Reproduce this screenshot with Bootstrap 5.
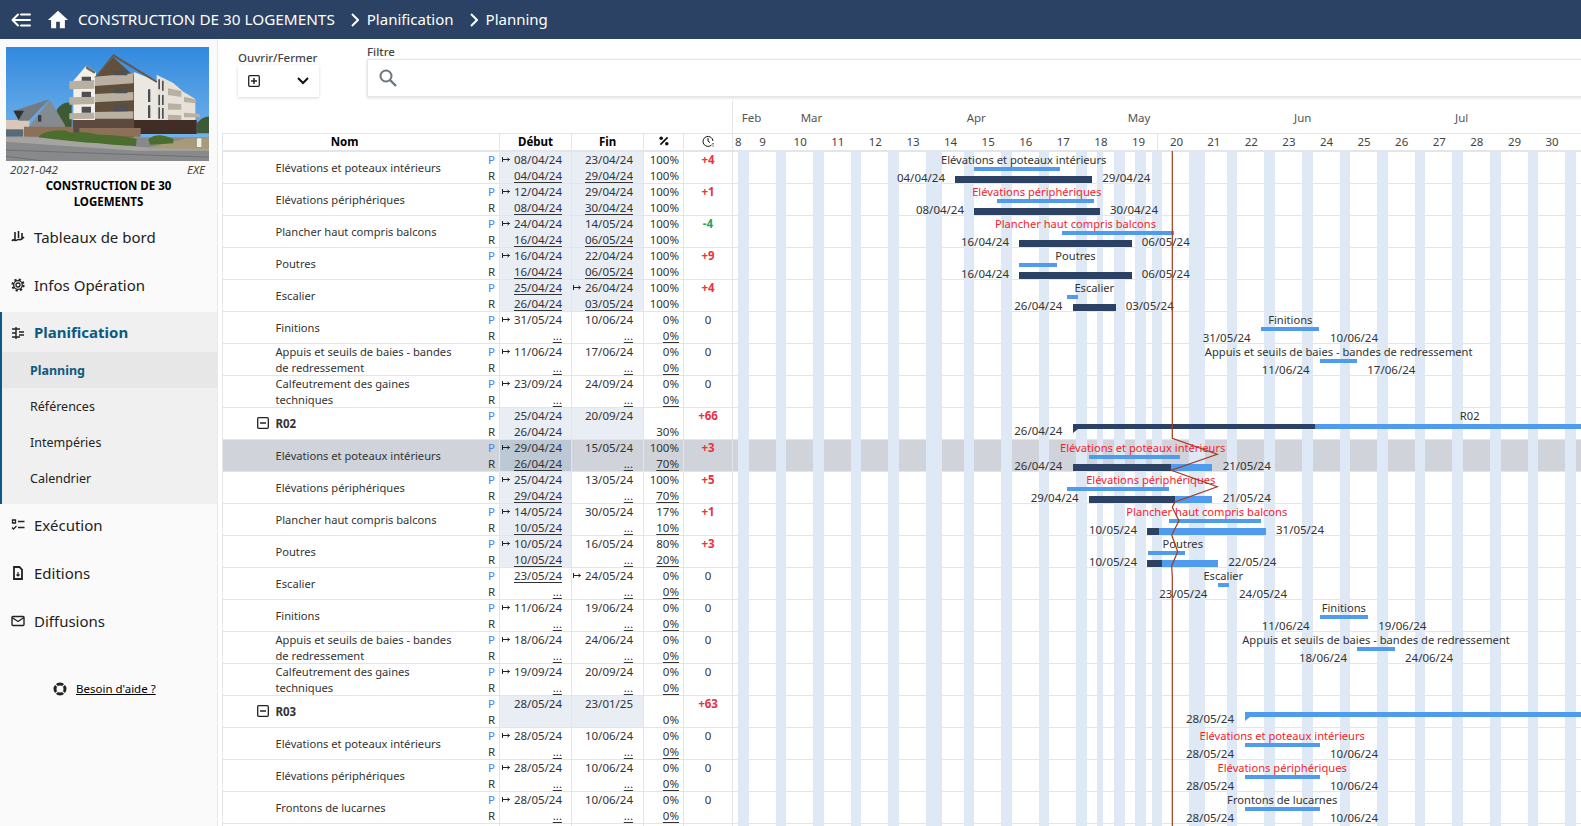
<!DOCTYPE html>
<html lang="fr">
<head>
  <meta charset="UTF-8">
  <title>Planning</title>
  <link href="https://cdn.jsdelivr.net/npm/bootstrap@5.3.2/dist/css/bootstrap.min.css" rel="stylesheet">
  <style>
    html, body { height: 100%; overflow: hidden; }
    body { font-family: "Noto Sans", "Open Sans", sans-serif; font-size: 11.5px; color: #333; background: #fff; }
    .topbar { height: 39px; flex: none; background: #2b4264; color: #fff; font-size: 15px; padding-left: 11px; }
    .topbar svg { flex: none; }
    .top-title { font-size: 15.3px; margin-left: 9px; }
    .sidebar { width: 218px; flex: none; background: #fafafa; border-right: 1px solid #e9e9e9; padding-top: 8px; }
    .photo { display: block; width: 203px; height: 114px; margin-left: 6px; }
    .code-line { padding: 1px 12px 0 10px; font-style: italic; font-size: 11.5px; line-height: 16px; color: #444; }
    .op-title { font-weight: 700; font-size: 11.5px; line-height: 16px; color: #000; text-align: center; padding: 0 30px; margin-bottom: 3px; }
    .nav-main { height: 48px; font-size: 15px; color: #222; padding-left: 11px; gap: 9px; }
    .nav-main svg { flex: none; width: 14px; height: 14px; }
    .plan-section { background: #f0f0f0; border-left: 2px solid #0c5a82; margin: 3px 0 -3px; padding-bottom: 8px; }
    .plan-head { height: 40px; padding-top: 1px; font-size: 15px; font-weight: 700; color: #0c5a82; padding-left: 9px; gap: 9px; }
    .plan-head svg { flex: none; width: 14px; height: 14px; }
    .sub-item { height: 36px; padding: 2px 0 0 28px; font-size: 12.5px; color: #222; }
    .sub-item.active { background: #e7e7e7; font-weight: 700; color: #0c5a82; }
    .help { margin-top: 35px; font-size: 11.5px; padding-left: 53px; gap: 9px; color: #000; }
    .main-area { min-width: 0; overflow: hidden; padding-left: 4px; }
    .toolbar { height: 62px; }
    .tool-open { width: 81px; margin: 11px 48px 0 16px; flex: none; }
    .tool-label { font-size: 11.5px; font-weight: 500; color: #444; line-height: 15px; white-space: nowrap; }
    .open-box { height: 32px; background: #fff; box-shadow: 0 1px 3px rgba(0,0,0,.16); padding: 0 10px; }
    .tool-filter { margin-top: 5px; width: 1300px; flex: none; }
    .filter-box { height: 38px; background: #fff; border: 1px solid #e6e6e6; box-shadow: 0 1px 3px rgba(0,0,0,.14); padding-left: 11px; }
    .months { height: 32px; margin-left: 510px; border-left: 1px solid #e3e5ea; color: #555; }
    .month { top: 8px; }
    .plan-wrap { width: 1360px; }
    .plan-table { table-layout: fixed; width: 1360px; margin: 0; border-color: #e3e5ea; font-size: 11.5px; color: #333; }
    .plan-table th, .plan-table td { padding: 0; border-color: #e3e5ea; line-height: 15.5px; vertical-align: middle; background: transparent; color: inherit; box-shadow: none; }
    .plan-table thead th { height: 17px; font-weight: 700; color: #000; text-align: center; font-size: 11.5px; border-bottom-width: 2px; }
    .plan-table thead th.nom { padding-right: 33px; }
    .plan-table tbody td { height: 31px; }
    .hd-icon { display: block; margin: -3px auto 0; }
    .week-row { height: 16px; overflow: hidden; font-weight: 400; color: #444; }
    .week { width: 37.6px; flex: none; text-align: center; }
    .week.first { width: 10.8px; }
    .week.now { border-left: 1px solid #e3e5ea; }
    .name-cell { height: 31px; padding-left: 52.5px; }
    .name-text { flex: 1; max-width: 186px; margin-right: auto; line-height: 16px; font-size: 11.15px; }
    .group-name { font-weight: 700; font-size: 11.5px; }
    .minus { position: absolute; left: 34px; top: 9px; }
    .pr { width: 15px; flex: none; text-align: center; margin-left: auto; }
    .p-letter { color: #4a80e6; }
    .date-line { height: 15.5px; padding-right: 10px; white-space: nowrap; }
    .deb .date-line { padding-right: 9px; }
    .date-line u { text-underline-offset: 2px; }
    .arrow { margin-right: 4px; }
    .pct { text-align: right; padding-right: 4px !important; }
    .pct u { text-underline-offset: 2px; }
    .delay { text-align: center; }
    .delay b { font-weight: 700; }
    .late { color: #e8323f; }
    .early { color: #2aa35a; }
    .shade { background: #e9edf4 !important; }
    tr.selected td { background: #d0d3da !important; }
    tr.selected td.shade { background: #bcc8d3 !important; }
    .stripes { top: 18px; bottom: 0; left: 511px; right: 0; z-index: 1; }
    .stripe { top: 0; bottom: 0; background: #dee9f5; }
    .gantt-cell { position: relative; }
    .g { position: absolute; z-index: 2; white-space: nowrap; line-height: 16px; }
    .g-label { top: 0; transform: translateX(-50%); font-size: 11.15px; }
    .g-red { color: #f5222d; }
    .g-date { top: 18px; }
    .g-plan { top: 15px; height: 4px; background: #4f9bee; }
    .g-dark { top: 24px; height: 7px; background: #2b4264; }
    .g-light { top: 24px; height: 7px; background: #4f9bee; }
    .g-sum { top: 16px; height: 5px; }
    .today { left: 0; top: 0; z-index: 3; pointer-events: none; }
  </style>
</head>
<body class="d-flex flex-column">

  <header class="topbar d-flex align-items-center">
    <svg width="20" height="14" viewBox="0 0 20 14" fill="none" stroke="#fff" stroke-width="2" stroke-linecap="round" stroke-linejoin="round"><path d="M7 1.500 1.500 7 7 12.500M1.500 7H19M10 1.500h9M10 12.500h9"/></svg>
    <svg class="ms-3" width="22" height="22" viewBox="0 0 24 24" fill="#fff"><path d="M10 21v-7h4v7h5.500v-9H23L12 2 1 12h3.500v9z"/></svg>
    <span class="top-title">CONSTRUCTION DE 30 LOGEMENTS</span>
    <svg class="ms-3" width="8" height="14" viewBox="0 0 8 14" fill="none" stroke="#fff" stroke-width="2"><path d="m1 1 6 6-6 6"/></svg>
    <span class="ms-2">Planification</span>
    <svg class="ms-3" width="8" height="14" viewBox="0 0 8 14" fill="none" stroke="#fff" stroke-width="2"><path d="m1 1 6 6-6 6"/></svg>
    <span class="ms-2">Planning</span>
  </header>

  <div class="d-flex flex-grow-1 overflow-hidden">
    <aside class="sidebar">
      <svg class="photo" viewBox="18 21 609 342" preserveAspectRatio="none">
        <defs>
          <linearGradient id="sky" x1="0" y1="0" x2="0" y2="1"><stop offset="0" stop-color="#2f88de"/><stop offset="1" stop-color="#74b3ea"/></linearGradient>
          <filter id="soft" x="0" y="0" width="100%" height="100%"><feGaussianBlur stdDeviation="1.500"/></filter>
          <clipPath id="frame"><rect x="18" y="21" width="609" height="342"/></clipPath>
        </defs>
        <g clip-path="url(#frame)"><g filter="url(#soft)">
        <rect x="10" y="10" width="630" height="290" fill="url(#sky)"/>
        <path d="M170 210q20-30 45-20v75h-45zM590 250q20-25 45-20v50h-45z" fill="#3d5a34"/>
        <!-- ground -->
        <rect x="10" y="292" width="630" height="80" fill="#88898b"/>
        <path d="M10 292h108l310 30h210v10H410L10 305z" fill="#a5a4a1"/>
        <path d="M10 330 640 352M10 348l128 16" stroke="#626366" stroke-width="2" fill="none"/>
        <path d="M440 325l120-30h80v32z" fill="#a79a76"/>
        <!-- neighbour house -->
        <path d="M10 240h78v50H10z" fill="#d8c8ba"/>
        <path d="M88 258 150 180l45 76v14H88z" fill="#858a8f"/>
        <path d="M42 212 148 178 86 242H56z" fill="#757a80"/>
        <path d="M40 212h32L56 240z" fill="#2f3135"/>
        <rect x="114" y="225" width="10" height="20" fill="#3a3d40"/>
        <path d="M10 268h60v22H10z" fill="#566a78"/>
        <!-- far wing -->
        <path d="M470 104l50 25 30 26 36 22v88H470z" fill="#e6e1d9"/>
        <!-- main block -->
        <path d="M402 96 472 124v136h-70z" fill="#ebe8e2"/>
        <path d="M220 122 258 78l30 17v150h-68z" fill="#f3f0ea"/>
        <path d="M285 112 340 52l62 56v132H285z" fill="#5f4f3b"/>
        <path d="M284 112 340 42l132 82-3 4-129-78-51 66z" fill="#66584a"/>
        <path d="M258 78l30 17-5 6-25-15z" fill="#77695a"/>
        <path d="M208 124l75-4v26l-75 2zM208 172l75-2v22l-75 2zM208 220l75-2v18l-75 2zM285 110l115-10v30l-115 8zM285 162l115-6v25l-115 6zM285 216l115-2v22H285zM504 145l40 8v18l-40-6zM504 190l40 3v16h-40zM504 224l40 2v14h-40zM552 170l34 8v12l-34-4zM552 218l48 4v10h-48z" fill="#b9b0a1"/>
        <path d="M245 110h28v12h-28zM245 155h28v16h-28zM245 200h28v18h-28zM342 94h40v12h-40zM342 146h40v14h-40zM342 194h40v20h-40zM444 148h7v38h-7zM444 196h7v38h-7zM475 118h5v30h-5zM475 164h5v32h-5zM475 202h5v34h-5zM486 122h5v30h-5zM486 165h5v30h-5zM486 204h5v32h-5z" fill="#4e4f52"/>
        <!-- brick base and fence -->
        <path d="M218 240h184v52H218z" fill="#5c4a40"/>
        <path d="M402 240h188v42H402z" fill="#3f2d28"/>
        <path d="M72 260h148v30H72zM238 264h184v26H238z" fill="#8c6f58"/>
        <!-- hedges -->
        <path d="M115 292q8-14 40-18 30-8 60 4 40-6 80 6 60 0 115 12l-2 22q-60-2-110-8-80-4-183-18zM445 298q25-24 75-2v14l-70 4z" fill="#4b6e2d"/>
        <rect x="591" y="295" width="13" height="26" fill="#eee"/>
        </g></g>
      </svg>
      <div class="code-line d-flex justify-content-between"><span>2021-042</span><span>EXE</span></div>
      <div class="op-title">CONSTRUCTION DE 30 LOGEMENTS</div>
      <div class="nav-main d-flex align-items-center">
        <svg viewBox="0 0 14 14" fill="none" stroke="#222" stroke-width="1.600"><path d="M4 2v8M7.500 1v7M11 3v6M1 11c2-3 3 1 5-1s3 2 7-3"/></svg>Tableaux de bord
      </div>
      <div class="nav-main d-flex align-items-center">
        <svg viewBox="0 0 14 14" fill="none" stroke="#222"><circle cx="7" cy="7" r="2" stroke-width="1.300"/><circle cx="7" cy="7" r="4.300" stroke-width="1.300"/><circle cx="7" cy="7" r="5.600" stroke-width="2" stroke-dasharray="2.200 2.200"/></svg>Infos Opération
      </div>
      <div class="plan-section">
        <div class="plan-head d-flex align-items-center">
          <svg viewBox="0 0 14 14" fill="none" stroke="#222" stroke-width="1.400"><path d="M5 1v12M1 3h8M1 7h4M1 11h8M8 6h5M8 9h5"/></svg>Planification
        </div>
        <div class="sub-item active d-flex align-items-center">Planning</div>
        <div class="sub-item d-flex align-items-center">Références</div>
        <div class="sub-item d-flex align-items-center">Intempéries</div>
        <div class="sub-item d-flex align-items-center">Calendrier</div>
      </div>
      <div class="nav-main d-flex align-items-center">
        <svg viewBox="0 0 14 14" fill="none" stroke="#222" stroke-width="1.300"><path d="M1.500 2h3v3h-3zM7 3.500h6.500M1 9.500l1.500 1.500 3-3M7 9.500h6.500"/></svg>Exécution
      </div>
      <div class="nav-main d-flex align-items-center">
        <svg viewBox="0 0 14 14" fill="none" stroke="#222" stroke-width="1.800"><path d="M3 1h5.500L11 3.500V13H3z"/><path d="M7 6v4M5.500 8.500 7 10l1.500-1.500" stroke-width="1.200"/></svg>Editions
      </div>
      <div class="nav-main d-flex align-items-center">
        <svg viewBox="0 0 14 14" fill="none" stroke="#222" stroke-width="1.400"><rect x="1" y="2.500" width="12" height="9" rx="1"/><path d="m1 3.500 6 4 6-4"/></svg>Diffusions
      </div>
      <div class="help d-flex align-items-center">
        <svg width="14" height="14" viewBox="0 0 14 14" fill="none" stroke="#222"><circle cx="7" cy="7" r="5" stroke-width="3"/><path d="M7 0v3.500M7 10.500V14M0 7h3.500M10.500 7H14" stroke="#fafafa" stroke-width="1.200" transform="rotate(45 7 7)"/></svg>
        <u>Besoin d'aide ?</u>
      </div>
    </aside>

    <main class="main-area flex-grow-1">
      <div class="toolbar d-flex">
        <div class="tool-open">
          <div class="tool-label">Ouvrir/Fermer</div>
          <div class="open-box d-flex align-items-center justify-content-between">
            <svg width="12" height="12" viewBox="0 0 12 12" fill="none" stroke="#222" stroke-width="1.300"><rect x=".7" y=".7" width="10.600" height="10.600" rx="1"/><path d="M3 6h6M6 3v6" stroke-width="1.500"/></svg>
            <svg width="12" height="8" viewBox="0 0 12 8" fill="none" stroke="#111" stroke-width="2"><path d="m1 1 5 5 5-5"/></svg>
          </div>
        </div>
        <div class="tool-filter">
          <div class="tool-label">Filtre</div>
          <div class="filter-box d-flex align-items-center">
            <svg width="18" height="18" viewBox="0 0 18 18" fill="none" stroke="#6c757d" stroke-width="2"><circle cx="7" cy="7" r="5.500"/><path d="m11 11 6 6" stroke-width="2.400"/></svg>
          </div>
        </div>
      </div>

      <div class="months position-relative" id="months"></div>

      <div class="plan-wrap position-relative">
        <table class="table table-bordered plan-table">
          <colgroup>
            <col style="width:277px"><col style="width:72px"><col style="width:72px"><col style="width:40px"><col style="width:49px"><col>
          </colgroup>
          <thead>
            <tr>
              <th class="nom">Nom</th>
              <th>Début</th>
              <th>Fin</th>
              <th><svg class="hd-icon" width="10" height="10" viewBox="0 0 10 10" fill="#111"><circle cx="2.200" cy="2.200" r="1.800"/><circle cx="7.800" cy="7.800" r="1.800"/><path d="M8 .8 9.200 2 2 9.200.8 8z"/></svg></th>
              <th><svg class="hd-icon" width="12" height="12" viewBox="0 0 12 12" fill="none" stroke="#111"><path d="M9.500 10A5 5 0 1 1 11 6"/><path d="M6 3v3l2 1.500M11 8v1.500M11 10.500v1"/></svg></th>
              <th><div class="week-row d-flex" id="weeks"></div></th>
            </tr>
          </thead>
          <tbody id="rows"></tbody>
        </table>
        <div class="stripes position-absolute" id="stripes"></div>
        <svg class="today position-absolute" width="1360" height="693" fill="none" stroke="#a23a1d" stroke-width="1.200" id="today"></svg>
      </div>
    </main>
  </div>

  <script src="https://cdn.jsdelivr.net/npm/bootstrap@5.3.2/dist/js/bootstrap.bundle.min.js"></script>
  <script>
    // page x of the left edge of the gantt cell
    const GX = 733;
    const ELEV = 'Elévations et poteaux intérieurs';
    const PERI = 'Elévations périphériques';
    const PLAN = 'Plancher haut compris balcons';
    const APP = 'Appuis et seuils de baies - bandes de redressement';
    const CALF = 'Calfeutrement des gaines techniques';

    // '>' = arrow before the date, '_' = underlined, '...' = no actual date yet
    const rows = [
      { n: ELEV, d: ['>08/04/24', '_04/04/24'], f: ['23/04/24', '_29/04/24'], pc: ['100%', '100%'], dl: '+4', sh: 'df', dates: ['04/04/24', '29/04/24'],
        g: { l: ELEV, lx: 1023.7, plan: [974, 1059.7], dark: [955, 1092], a: 945, b: 1102.3 } },
      { n: PERI, d: ['>12/04/24', '_08/04/24'], f: ['29/04/24', '_30/04/24'], pc: ['100%', '100%'], dl: '+1', sh: 'df', dates: ['08/04/24', '30/04/24'],
        g: { l: PERI, red: 1, lx: 1036.8, plan: [997.3, 1094], dark: [974, 1099.7], a: 964, b: 1110 } },
      { n: PLAN, d: ['>24/04/24', '_16/04/24'], f: ['14/05/24', '_06/05/24'], pc: ['100%', '100%'], dl: '-4', sh: 'df', dates: ['16/04/24', '06/05/24'],
        g: { l: PLAN, red: 1, lx: 1075.5, plan: [1062, 1174.3], dark: [1019, 1131.7], a: 1009, b: 1141.7 } },
      { n: 'Poutres', d: ['>16/04/24', '_16/04/24'], f: ['22/04/24', '_06/05/24'], pc: ['100%', '100%'], dl: '+9', sh: 'df', dates: ['16/04/24', '06/05/24'],
        g: { l: 'Poutres', lx: 1075.5, plan: [1019, 1056.7], dark: [1019, 1131.7], a: 1009, b: 1141.7 } },
      { n: 'Escalier', d: ['_25/04/24', '_26/04/24'], f: ['>26/04/24', '_03/05/24'], pc: ['100%', '100%'], dl: '+4', sh: 'df', dates: ['26/04/24', '03/05/24'],
        g: { l: 'Escalier', lx: 1094.3, plan: [1067, 1078], dark: [1072.7, 1115.7], a: 1062.3, b: 1125.7 } },
      { n: 'Finitions', d: ['>31/05/24', '_...'], f: ['10/06/24', '_...'], pc: ['0%', '_0%'], dl: '0', dates: ['31/05/24', '10/06/24'],
        g: { l: 'Finitions', lx: 1290.3, plan: [1261, 1319.3], a: 1250.7, b: 1330 } },
      { n: APP, d: ['>11/06/24', '_...'], f: ['17/06/24', '_...'], pc: ['0%', '_0%'], dl: '0', dates: ['11/06/24', '17/06/24'],
        g: { l: APP, lx: 1338.7, plan: [1319.7, 1357], a: 1309.7, b: 1367.3 } },
      { n: CALF, d: ['>23/09/24', '_...'], f: ['24/09/24', '_...'], pc: ['0%', '_0%'], dl: '0', dates: [], g: {} },
      { n: 'R02', grp: 1, d: ['25/04/24', '26/04/24'], f: ['20/09/24', ''], pc: ['', '30%'], dl: '+66', sh: 'df', dates: ['26/04/24'],
        g: { l: 'R02', lx: 1469.7, sum: [1072.5, 1315.3], sumEnd: 1581, a: 1062.3 } },
      { n: ELEV, sel: 1, d: ['>29/04/24', '_26/04/24'], f: ['15/05/24', '_...'], pc: ['100%', '_70%'], dl: '+3', sh: 'd', dates: ['26/04/24', '21/05/24'],
        g: { l: ELEV, red: 1, lx: 1142.7, plan: [1089, 1180], dark: [1072.7, 1170.7], light: 1212.3, a: 1062.3, b: 1222.7 } },
      { n: PERI, d: ['>25/04/24', '_29/04/24'], f: ['13/05/24', '_...'], pc: ['100%', '_70%'], dl: '+5', sh: 'd', dates: ['29/04/24', '21/05/24'],
        g: { l: PERI, red: 1, lx: 1150.8, plan: [1067.3, 1169], dark: [1089, 1175], light: 1212.3, a: 1078.7, b: 1222.7 } },
      { n: PLAN, d: ['>14/05/24', '_10/05/24'], f: ['30/05/24', '_...'], pc: ['17%', '_10%'], dl: '+1', sh: 'd', dates: ['10/05/24', '31/05/24'],
        g: { l: PLAN, red: 1, lx: 1206.8, plan: [1169.3, 1260.7], dark: [1147.3, 1159.3], light: 1266, a: 1137, b: 1276 } },
      { n: 'Poutres', d: ['>10/05/24', '_10/05/24'], f: ['16/05/24', '_...'], pc: ['80%', '_20%'], dl: '+3', sh: 'd', dates: ['10/05/24', '22/05/24'],
        g: { l: 'Poutres', lx: 1182.8, plan: [1147.7, 1185], dark: [1147.3, 1161.7], light: 1217.7, a: 1137, b: 1228.3 } },
      { n: 'Escalier', d: ['_23/05/24', '_...'], f: ['>24/05/24', '_...'], pc: ['0%', '_0%'], dl: '0', dates: ['23/05/24', '24/05/24'],
        g: { l: 'Escalier', lx: 1223.3, plan: [1217.7, 1228.7], a: 1207.3, b: 1239 } },
      { n: 'Finitions', d: ['>11/06/24', '_...'], f: ['19/06/24', '_...'], pc: ['0%', '_0%'], dl: '0', dates: ['11/06/24', '19/06/24'],
        g: { l: 'Finitions', lx: 1343.8, plan: [1320, 1367.7], a: 1309.7, b: 1378.3 } },
      { n: APP, d: ['>18/06/24', '_...'], f: ['24/06/24', '_...'], pc: ['0%', '_0%'], dl: '0', dates: ['18/06/24', '24/06/24'],
        g: { l: APP, lx: 1376, plan: [1357.3, 1395], a: 1347, b: 1405 } },
      { n: CALF, d: ['>19/09/24', '_...'], f: ['20/09/24', '_...'], pc: ['0%', '_0%'], dl: '0', dates: [], g: {} },
      { n: 'R03', grp: 1, d: ['28/05/24', ''], f: ['23/01/25', ''], pc: ['', '0%'], dl: '+63', sh: 'df', dates: ['28/05/24'],
        g: { sum: [1244.7, 1244.7], sumEnd: 1581, a: 1234 } },
      { n: ELEV, d: ['>28/05/24', '_...'], f: ['10/06/24', '_...'], pc: ['0%', '_0%'], dl: '0', dates: ['28/05/24', '10/06/24'],
        g: { l: ELEV, red: 1, lx: 1282.2, plan: [1244.7, 1320], a: 1234, b: 1330 } },
      { n: PERI, d: ['>28/05/24', '_...'], f: ['10/06/24', '_...'], pc: ['0%', '_0%'], dl: '0', dates: ['28/05/24', '10/06/24'],
        g: { l: PERI, red: 1, lx: 1282.2, plan: [1244.7, 1320], a: 1234, b: 1330 } },
      { n: 'Frontons de lucarnes', d: ['>28/05/24', '_...'], f: ['10/06/24', '_...'], pc: ['0%', '_0%'], dl: '0', dates: ['28/05/24', '10/06/24'],
        g: { l: 'Frontons de lucarnes', lx: 1282.2, plan: [1244.7, 1320], a: 1234, b: 1330 } }
    ];

    const ARROW = '<svg class="arrow" width="8" height="7" viewBox="0 0 8 7" fill="none" stroke="#222"><path d="M.5 1v5M.5 3.500h7M5.500 2l2 1.500-2 1.500"/></svg>';

    function dateLine(s) {
      if (s[0] === '>') s = ARROW + s.slice(1);
      else if (s[0] === '_') s = '<u>' + s.slice(1) + '</u>';
      return `<div class="date-line d-flex align-items-center justify-content-end">${s}</div>`;
    }

    function pctText(s) {
      return s[0] === '_' ? '<u>' + s.slice(1) + '</u>' : s;
    }

    function bar(cls, a, b) {
      return `<div class="g ${cls}" style="left:${a - GX}px;width:${b - a}px"></div>`;
    }

    function ganttCell(r) {
      const g = r.g;
      let h = '';
      if (g.l) h += `<div class="g g-label ${g.red ? 'g-red' : ''}" style="left:${g.lx - GX}px">${g.l}</div>`;
      if (g.plan) h += bar('g-plan', g.plan[0], g.plan[1]);
      if (g.dark) h += bar('g-dark', g.dark[0], g.dark[1]);
      if (g.light) h += bar('g-light', g.dark[1], g.light);
      if (g.sum) {
        h += bar('g-dark g-sum', g.sum[0], g.sum[1]);
        h += bar('g-light g-sum', g.sum[1], g.sumEnd);
        const col = g.sum[0] === g.sum[1] ? '#4f9bee' : '#2b4264';
        h += `<svg class="g" style="left:${g.sum[0] - GX}px;top:21px" width="5" height="4"><path d="M0 0h5L0 4z" fill="${col}"/></svg>`;
      }
      if (g.a) h += `<div class="g g-date" style="${r.grp ? 'top:15px;' : ''}right:calc(100% - ${g.a - GX}px)">${r.dates[0]}</div>`;
      if (g.b) h += `<div class="g g-date" style="left:${g.b - GX}px">${r.dates[1]}</div>`;
      return h;
    }

    const tbody = document.getElementById('rows');
    rows.forEach(r => {
      const sh = r.sh || '';
      const tr = document.createElement('tr');
      if (r.sel) tr.className = 'selected';
      const minus = r.grp ? '<svg class="minus" width="12" height="12" viewBox="0 0 12 12" fill="none" stroke="#222" stroke-width="1.300"><rect x=".7" y=".7" width="10.600" height="10.600" rx="1"/><path d="M3 6h6" stroke-width="1.500"/></svg>' : '';
      tr.innerHTML = `
        <td><div class="name-cell d-flex align-items-center position-relative">${minus}
          <div class="name-text ${r.grp ? 'group-name' : ''}">${r.n}</div>
          <div class="pr"><div class="p-letter">P</div><div>R</div></div></div></td>
        <td class="deb ${sh.includes('d') ? 'shade' : ''}">${dateLine(r.d[0])}${dateLine(r.d[1])}</td>
        <td class="${sh.includes('f') ? 'shade' : ''}">${dateLine(r.f[0])}${dateLine(r.f[1])}</td>
        <td class="pct"><div>${pctText(r.pc[0]) || '&nbsp;'}</div><div>${pctText(r.pc[1])}</div></td>
        <td class="delay"><div class="${r.dl[0] === '+' ? 'late' : r.dl[0] === '-' ? 'early' : ''}">${r.dl === '0' ? r.dl : '<b>' + r.dl + '</b>'}</div><div>&nbsp;</div></td>
        <td class="gantt-cell">${ganttCell(r)}</td>`;
      tbody.appendChild(tr);
    });
    // next row, cut off by the bottom of the window
    const more = document.createElement('tr');
    more.innerHTML = '<td></td><td></td><td></td><td></td><td></td><td></td>';
    tbody.appendChild(more);

    // months and week numbers
    const months = [['Feb', 741.7], ['Mar', 800.7], ['Apr', 966.7], ['May', 1127.7], ['Jun', 1294], ['Jul', 1455]];
    document.getElementById('months').innerHTML = months.map(m =>
      `<span class="month position-absolute" style="left:${m[1] - GX}px">${m[0]}</span>`).join('');

    let weeks = '<div class="week first">8</div>';
    for (let w = 9; w <= 30; w++) weeks += `<div class="week ${w === 20 ? 'now' : ''}">${w}</div>`;
    document.getElementById('weeks').innerHTML = weeks;

    // non working days: weekends every 37.6px, plus bank holidays
    let stripes = '';
    const addStripe = (x, w) => { stripes += `<div class="stripe position-absolute" style="left:${x - GX}px;width:${w}px"></div>`; };
    for (let k = 0; k < 23; k++) {
      const wide = k === 5 || k === 12;
      addStripe(738 + 37.6 * k, wide ? 16 : 10.7);
    }
    addStripe(1097.3, 5.4);
    addStripe(1135, 10.7);
    document.getElementById('stripes').innerHTML = stripes;

    // today line, the zigzag follows the progress of the R02 tasks
    const pts = [[1172.3, 151], [1172.3, 438.3], [1217.3, 454.3], [1171.3, 470.3], [1217.3, 486.7],
      [1175, 502], [1172.3, 507.3], [1179, 520.7], [1171.7, 535], [1177.7, 551.7], [1171.7, 565.7], [1172.3, 578], [1172.3, 826]];
    document.getElementById('today').innerHTML = `<polyline points="${pts.map(p => (p[0] - 222) + ',' + (p[1] - 133)).join(' ')}"/>`;
  </script>
</body>
</html>
